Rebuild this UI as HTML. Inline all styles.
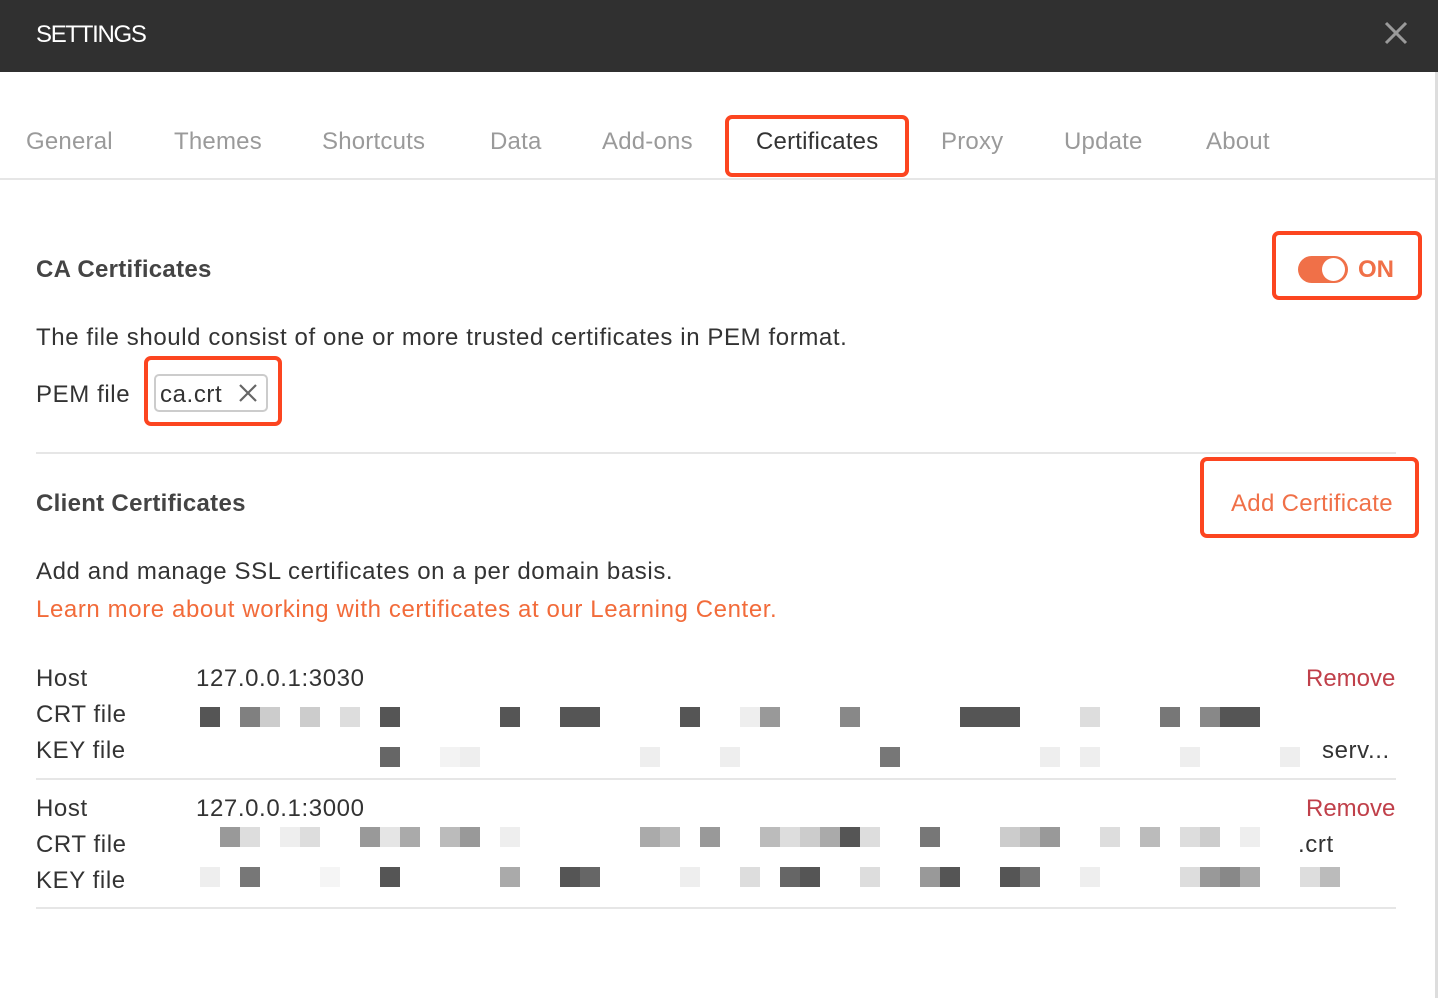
<!DOCTYPE html>
<html><head><meta charset="utf-8"><style>
body{margin:0;width:1438px;height:998px;background:#fff;position:relative;overflow:hidden;font-family:"Liberation Sans","DejaVu Sans",sans-serif;color:#333}
.a{position:absolute;white-space:nowrap}
.t{font-size:24px;top:128px;color:#9a9a9a;letter-spacing:0.2px}
.box{position:absolute;border:4px solid #fc4520;border-radius:7px;box-sizing:border-box}
.tx{font-size:24px;color:#333;letter-spacing:0.6px}
.b{position:absolute;height:20px;width:20px}
</style></head><body>
<div class="a" style="left:0;top:0;width:1438px;height:72px;background:#303030"></div>
<div class="a" style="left:36px;top:21px;font-size:24px;color:#fff;letter-spacing:-1.3px">SETTINGS</div>
<svg class="a" style="left:1384px;top:21px" width="24" height="24" viewBox="0 0 24 24"><path d="M2 2L22 22M22 2L2 22" stroke="#9a9a9a" stroke-width="3"/></svg>
<div class="a" style="left:1435px;top:72px;width:3px;height:926px;background:#ddd"></div>
<div class="a t" style="left:26px">General</div>
<div class="a t" style="left:174px">Themes</div>
<div class="a t" style="left:322px">Shortcuts</div>
<div class="a t" style="left:490px">Data</div>
<div class="a t" style="left:602px">Add-ons</div>
<div class="a t" style="left:756px;color:#333">Certificates</div>
<div class="a t" style="left:941px">Proxy</div>
<div class="a t" style="left:1064px">Update</div>
<div class="a t" style="left:1206px">About</div>
<div class="box" style="left:725px;top:115px;width:184px;height:62px"></div>
<div class="a" style="left:0;top:178px;width:1435px;height:2px;background:#e6e6e6"></div>

<div class="a" style="left:36px;top:256px;font-size:24px;font-weight:bold;color:#444;letter-spacing:0.3px">CA Certificates</div>
<div class="box" style="left:1272px;top:231px;width:150px;height:69px"></div>
<div class="a" style="left:1298px;top:256px;width:50px;height:27px;border-radius:14px;background:#f07048"></div>
<div class="a" style="left:1322px;top:258px;width:23px;height:23px;border-radius:50%;background:#fff"></div>
<div class="a" style="left:1358px;top:256px;font-size:24px;font-weight:bold;color:#f07048">ON</div>

<div class="a tx" style="left:36px;top:324px">The file should consist of one or more trusted certificates in PEM format.</div>
<div class="a tx" style="left:36px;top:381px">PEM file</div>
<div class="box" style="left:144px;top:356px;width:138px;height:70px"></div>
<div class="a" style="left:154px;top:374px;width:114px;height:38px;border:2px solid #ccc;border-radius:5px;box-sizing:border-box"></div>
<div class="a tx" style="left:160px;top:381px">ca.crt</div>
<svg class="a" style="left:239px;top:384px" width="18" height="18" viewBox="0 0 18 18"><path d="M1 1L17 17M17 1L1 17" stroke="#666" stroke-width="2.2"/></svg>
<div class="a" style="left:36px;top:452px;width:1360px;height:2px;background:#e6e6e6"></div>

<div class="a" style="left:36px;top:490px;font-size:24px;font-weight:bold;color:#444;letter-spacing:0.3px">Client Certificates</div>
<div class="box" style="left:1200px;top:457px;width:219px;height:81px"></div>
<div class="a" style="left:1231px;top:490px;font-size:24px;color:#f07048;letter-spacing:0.3px">Add Certificate</div>
<div class="a tx" style="left:36px;top:558px">Add and manage SSL certificates on a per domain basis.</div>
<div class="a" style="left:36px;top:596px;font-size:24px;color:#f26b3a;letter-spacing:0.6px">Learn more about working with certificates at our Learning Center.</div>

<div class="a tx" style="left:36px;top:665px">Host</div>
<div class="a tx" style="left:196px;top:665px">127.0.0.1:3030</div>
<div class="a" style="left:1306px;top:665px;font-size:24px;color:#c0404a">Remove</div>
<div class="a tx" style="left:36px;top:701px">CRT file</div>
<div class="a tx" style="left:36px;top:737px">KEY file</div>
<div class="a tx" style="left:1322px;top:737px">serv...</div>
<div class="a" style="left:36px;top:778px;width:1360px;height:2px;background:#e6e6e6"></div>
<div class="a tx" style="left:36px;top:795px">Host</div>
<div class="a tx" style="left:196px;top:795px">127.0.0.1:3000</div>
<div class="a" style="left:1306px;top:795px;font-size:24px;color:#c0404a">Remove</div>
<div class="a tx" style="left:36px;top:831px">CRT file</div>
<div class="a tx" style="left:1298px;top:831px">.crt</div>
<div class="a tx" style="left:36px;top:867px">KEY file</div>
<div class="a" style="left:36px;top:907px;width:1360px;height:2px;background:#e6e6e6"></div>

<div id="px"></div>
<script>
var rows=[
[707,[[200,'#555'],[240,'#808080'],[260,'#ccc'],[300,'#ccc'],[340,'#ddd'],[380,'#555'],[500,'#555'],[560,'#555'],[580,'#555'],[680,'#555'],[740,'#eee'],[760,'#999'],[840,'#888'],[960,'#555'],[980,'#555'],[1000,'#555'],[1080,'#ddd'],[1160,'#777'],[1200,'#888'],[1220,'#555'],[1240,'#555']]],
[747,[[380,'#666'],[440,'#f3f3f3'],[460,'#eee'],[640,'#eee'],[720,'#eee'],[880,'#777'],[1040,'#eee'],[1080,'#eee'],[1180,'#eee'],[1280,'#eee']]],
[827,[[220,'#999'],[240,'#ddd'],[280,'#eee'],[300,'#ddd'],[360,'#999'],[380,'#e5e5e5'],[400,'#aaa'],[440,'#bbb'],[460,'#999'],[500,'#eee'],[640,'#aaa'],[660,'#bbb'],[700,'#999'],[760,'#bbb'],[780,'#ddd'],[800,'#ccc'],[820,'#aaa'],[840,'#555'],[860,'#ddd'],[920,'#777'],[1000,'#ccc'],[1020,'#bbb'],[1040,'#999'],[1100,'#ddd'],[1140,'#bbb'],[1180,'#ddd'],[1200,'#ccc'],[1240,'#eee']]],
[867,[[200,'#eee'],[240,'#777'],[320,'#f5f5f5'],[380,'#555'],[500,'#aaa'],[560,'#555'],[580,'#666'],[680,'#eee'],[740,'#ddd'],[780,'#666'],[800,'#555'],[860,'#ddd'],[920,'#999'],[940,'#555'],[1000,'#555'],[1020,'#777'],[1080,'#eee'],[1180,'#ddd'],[1200,'#999'],[1220,'#888'],[1240,'#aaa'],[1300,'#ddd'],[1320,'#bbb']]]];
var h='';rows.forEach(function(r){r[1].forEach(function(b){h+='<div class="b" style="left:'+b[0]+'px;top:'+r[0]+'px;background:'+b[1]+'"></div>';});});
document.getElementById('px').innerHTML=h;
</script>
</body></html>
